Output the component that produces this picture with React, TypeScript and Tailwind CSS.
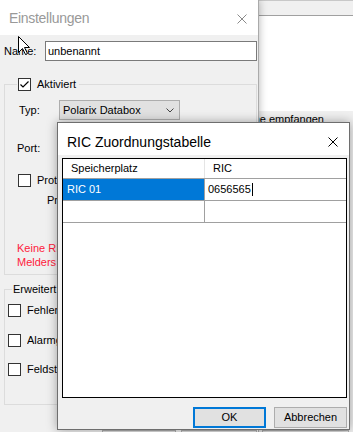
import { X } from 'lucide-react';

function CheckBox({ checked = false }: { checked?: boolean }) {
  return (
    <div className="w-[13px] h-[13px] border border-[#333333] bg-white shrink-0 flex items-center justify-center">
      {checked && (
        <svg width="11" height="11" viewBox="0 0 11 11">
          <polyline points="1.5,5.5 4,8 9.5,2.5" fill="none" stroke="#000" strokeWidth="1.2" />
        </svg>
      )}
    </div>
  );
}

function CloseIcon({ color }: { color: string }) {
  return (
    <svg width="10" height="10" viewBox="0 0 10 10">
      <path d="M0.5 0.5 L9.5 9.5 M9.5 0.5 L0.5 9.5" stroke={color} strokeWidth="1" />
    </svg>
  );
}

function Cursor() {
  return (
    <svg className="absolute left-[18px] top-[36px]" width="13" height="20" viewBox="0 0 13 20">
      <path
        d="M0.5 0.5 L0.5 16.5 L4.5 12.5 L7.5 18.5 L9.5 17.5 L6.5 11.5 L11.5 11.5 Z"
        fill="#fff"
        stroke="#000"
        strokeWidth="1"
      />
    </svg>
  );
}

// background window peeking out on the right
function BackgroundWindow() {
  return (
    <div className="absolute left-[200px] top-0 w-[153px] h-[432px] bg-[#f0f0f0] flex flex-col">
      <div className="h-[1px] bg-[#c8c8c8]" />
      <div className="h-[14px]" />
      <div className="h-[1px] bg-[#a0a0a0]" />
      <div className="h-[95px] ml-[59px] bg-white" />
      <div className="mt-[2px] ml-[59px] w-[65px] overflow-hidden flex justify-end leading-[13px] whitespace-nowrap">
        <span className="shrink-0">Nur eigene empfangen</span>
      </div>
      <div className="mt-auto ml-[62px] w-[87px] h-[2px] border-x border-t border-[#adadad] bg-[#e1e1e1]" />
    </div>
  );
}

// label partly hidden behind the RIC dialog
function Clipped({ w, children }: { w: string; children: React.ReactNode }) {
  return <span className={`${w} overflow-hidden whitespace-nowrap`}>{children}</span>;
}

function SettingsWindow() {
  return (
    <div className="absolute left-0 top-0 w-[259px] h-[432px] bg-[#f0f0f0] border-r border-[#aaaaaa] shadow-[0_0_8px_rgba(0,0,0,0.3)] flex flex-col">
      {/* Title */}
      <div className="h-[35px] shrink-0 bg-white flex items-center justify-between pl-[9px] pr-[11px] pt-[2px]">
        <span className="text-[14px] tracking-[-0.3px] text-[#999999]">Einstellungen</span>
        <CloseIcon color="#8a8a8a" />
      </div>

      {/* Name */}
      <div className="mt-[6px] h-[20px] flex items-center">
        <span className="pl-[4px] w-[45px]">Name:</span>
        <div className="w-[212px] h-[20px] border border-[#7a7a7a] bg-white pl-[2px] flex items-center">unbenannt</div>
      </div>

      {/* Aktiviert group */}
      <div className="mt-[23px] ml-[4px] w-[253px] h-[191px] shrink-0 border border-[#dcdcdc] flex flex-col">
        <div className="-mt-[8px] ml-[12px] w-fit h-[14px] bg-[#f0f0f0] pl-[1px] pr-[3px] flex items-center gap-[6px]">
          <CheckBox checked />
          <span>Aktiviert</span>
        </div>
        <div className="mt-[9px] h-[20px] flex items-center pl-[14px]">
          <span className="w-[40px]">Typ:</span>
          <div className="w-[121px] h-[20px] border border-[#adadad] bg-[#e1e1e1] pl-[3px] pr-[5px] flex items-center justify-between">
            <span>Polarix Databox</span>
            <svg width="8" height="5" viewBox="0 0 8 5">
              <path d="M0.5 0.5 L4 4 L7.5 0.5" fill="none" stroke="#444" strokeWidth="1" />
            </svg>
          </div>
        </div>
        <div className="mt-[18px] h-[20px] flex items-center pl-[12px]">
          <span className="w-[42px]">Port:</span>
        </div>
        <div className="mt-[16px] h-[13px] flex items-center gap-[6px] pl-[13px]">
          <CheckBox />
          <Clipped w="w-[20px]">Protokollierung aktivieren</Clipped>
        </div>
        <div className="mt-[7px] h-[13px] leading-[13px] pl-[42px] flex">
          <Clipped w="w-[10px]">Protokolldatei</Clipped>
        </div>
        <div className="mt-[34px] ml-[12px] w-[40px] overflow-hidden leading-[14px] text-[#ff1a3c] whitespace-nowrap">
          Keine RIC-Adressen hinterlegt. Bitte die RICs des
          <br />
          Melders eintragen.
        </div>
      </div>

      {/* Erweitert group */}
      <div className="mt-[14px] ml-[4px] w-[253px] h-[116px] shrink-0 border border-[#dcdcdc] flex flex-col">
        <div className="-mt-[8px] ml-[7px] w-fit h-[14px] bg-[#f0f0f0] px-[1px] flex items-center">Erweitert</div>
        <div className="mt-[8px] h-[13px] flex items-center gap-[6px] pl-[3px]">
          <CheckBox />
          <Clipped w="w-[30px]">Fehlermeldungen anzeigen</Clipped>
        </div>
        <div className="mt-[17px] h-[13px] flex items-center gap-[6px] pl-[3px]">
          <CheckBox />
          <Clipped w="w-[30px]">Alarmgruppen zusammenfassen</Clipped>
        </div>
        <div className="mt-[16px] h-[13px] flex items-center gap-[6px] pl-[3px]">
          <CheckBox />
          <Clipped w="w-[30px]">Feldstärke anzeigen</Clipped>
        </div>
      </div>

      {/* Footer buttons (cut off) */}
      <div className="mt-[25px] flex gap-[5px] pl-[102px]">
        <div className="w-[74px] h-[23px] border border-[#adadad] bg-[#e1e1e1]" />
        <div className="w-[76px] h-[23px] border border-[#adadad] bg-[#e1e1e1]" />
      </div>
    </div>
  );
}

function RicDialog() {
  return (
    <div className="absolute left-[57px] top-[122px] w-[293px] h-[308px] bg-[#f0f0f0] border border-[#6e6e6e] shadow-[0_0_10px_rgba(0,0,0,0.35)] flex flex-col">
      {/* Title */}
      <div className="h-[32px] shrink-0 bg-white flex items-center justify-between pl-[9px] pr-[11px] pt-[6px]">
        <span className="text-[14px] mt-[1px]">RIC Zuordnungstabelle</span>
        <CloseIcon color="#000" />
      </div>

      <div className="flex-1 flex flex-col pt-[3px] pl-[4px] pr-[2px] pb-[1px]">
        {/* Grid */}
        <div className="h-[240px] shrink-0 border border-black bg-white flex flex-col">
          <div className="h-[20px] flex border-b border-[#a0a0a0]">
            <div className="w-[142px] pl-[8px] flex items-center border-r border-[#e5e5e5]">Speicherplatz</div>
            <div className="flex-1 pl-[8px] flex items-center">RIC</div>
          </div>
          <div className="h-[22px] flex border-b border-[#a0a0a0]">
            <div className="w-[142px] flex border-r border-[#a0a0a0]">
              <div className="flex-1 bg-[#0078d7] text-white pl-[4px] flex items-center">RIC 01</div>
            </div>
            <div className="flex-1 pl-[3px] flex items-center">
              <span>0656565</span>
              <span className="w-[1px] h-[13px] bg-black ml-[1px]" />
            </div>
          </div>
          <div className="h-[22px] flex border-b border-[#a0a0a0]">
            <div className="w-[142px] border-r border-[#a0a0a0]" />
            <div className="flex-1" />
          </div>
        </div>

        {/* Buttons */}
        <div className="mt-[9px] flex justify-end gap-[8px]">
          <button className="w-[73px] h-[21px] border-2 border-[#0078d7] bg-[#e1e1e1] flex items-center justify-center">OK</button>
          <button className="w-[73px] h-[21px] border border-[#adadad] bg-[#e1e1e1] flex items-center justify-center">Abbrechen</button>
        </div>
      </div>
    </div>
  );
}

export default function App() {
  return (
    <div className="relative w-[353px] h-[432px] overflow-hidden bg-[#f0f0f0] text-[11px] text-black font-['Liberation_Sans',Arial,sans-serif]">
      <BackgroundWindow />
      <SettingsWindow />
      <RicDialog />
      <Cursor />
    </div>
  );
}
